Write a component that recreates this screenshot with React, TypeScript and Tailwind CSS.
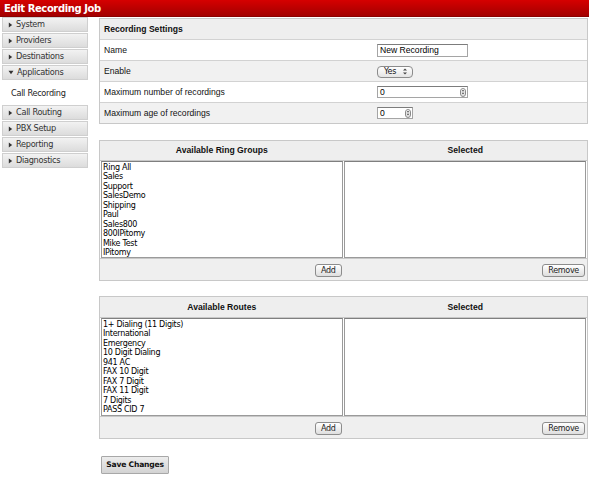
import React from 'react'

const SIDE_TOP = ['System', 'Providers', 'Destinations']
const SIDE_BOTTOM = ['Call Routing', 'PBX Setup', 'Reporting', 'Diagnostics']

const RING_GROUPS = [
  'Ring All', 'Sales', 'Support', 'SalesDemo', 'Shipping',
  'Paul', 'Sales800', '800IPitomy', 'Mike Test', 'IPitomy',
]

const ROUTES = [
  '1+ Dialing (11 Digits)', 'International', 'Emergency', '10 Digit Dialing', '941 AC',
  'FAX 10 Digit', 'FAX 7 Digit', 'FAX 11 Digit', '7 Digits', 'PASS CID 7',
]

function Tri({ down = false }: { down?: boolean }) {
  return down ? (
    <svg width="6" height="5" viewBox="0 0 6 5" className="shrink-0">
      <path d="M0.5 0.8 L5.5 0.8 L3 4.2 Z" fill="#333" />
    </svg>
  ) : (
    <svg width="5" height="6" viewBox="0 0 5 6" className="shrink-0">
      <path d="M0.8 0.5 L4.2 3 L0.8 5.5 Z" fill="#333" />
    </svg>
  )
}

function SideItem({ label, open = false }: { label: string; open?: boolean }) {
  return (
    <div className="h-[15px] flex items-center gap-[3px] pl-[5px] border border-[#cfcfcf] bg-gradient-to-b from-[#f2f2f2] to-[#dcdcdc] text-[#333] font-['DejaVu_Sans',sans-serif] text-[8.2px] tracking-[-0.3px]">
      <Tri down={open} />
      <span>{label}</span>
    </div>
  )
}

function Arrows() {
  return (
    <svg width="4" height="7" viewBox="0 0 4 7" className="shrink-0">
      <path d="M0 2.6 L2 0.4 L4 2.6 Z M0 4.4 L2 6.6 L4 4.4 Z" fill="#444" />
    </svg>
  )
}

function Spinner() {
  return (
    <div className="w-[6px] h-[9px] rounded-[3px] border border-[#8a8a8a] bg-gradient-to-b from-white to-[#e0e0e0] flex items-center justify-center">
      <svg width="4" height="6" viewBox="0 0 4 6">
        <path d="M0.6 2.3 L2 0.8 L3.4 2.3 Z M0.6 3.7 L2 5.2 L3.4 3.7 Z" fill="#444" />
      </svg>
    </div>
  )
}

function MacButton({ label }: { label: string }) {
  return (
    <button className="h-[13px] px-[5px] rounded-[3px] border border-[#8c8c8c] bg-gradient-to-b from-white to-[#dedede] text-[#222] font-['DejaVu_Sans',sans-serif] text-[8px] tracking-[-0.3px] leading-none">
      {label}
    </button>
  )
}

function Listbox({ items, tall }: { items: string[]; tall?: boolean }) {
  return (
    <div className={`${tall ? 'h-[98px]' : 'h-[97px]'} overflow-hidden pt-[0.5px] bg-white border border-[#9a9a9a] border-t-[#7f7f7f] font-['DejaVu_Sans',sans-serif] text-[8px] tracking-[-0.3px] leading-[9.5px] text-black`}>
      {items.map((item) => (
        <div key={item} className="pl-[1px] whitespace-nowrap">{item}</div>
      ))}
    </div>
  )
}

function TransferTable({ title, items, tall }: { title: string; items: string[]; tall?: boolean }) {
  return (
    <div className="border border-[#c8c8c8]">
      <div className={`grid grid-cols-2 ${tall ? 'h-[21px]' : 'h-[20px]'} items-center bg-[#eeeeee] border-b border-[#c8c8c8] font-['Liberation_Sans',Arial,sans-serif] text-[8.6px] font-bold text-[#111]`}>
        <div className="text-center">{title}</div>
        <div className="text-center">Selected</div>
      </div>
      <div className="grid grid-cols-2 gap-[1px] px-[1px] bg-white">
        <Listbox items={items} tall={tall} />
        <Listbox items={[]} tall={tall} />
      </div>
      <div className="grid grid-cols-2 h-[22px] items-center bg-[#efefef] border-t border-[#c8c8c8]">
        <div className="flex justify-end pr-[2px] pt-[2px]">
          <MacButton label="Add" />
        </div>
        <div className="flex justify-end pr-[2px] pt-[2px]">
          <MacButton label="Remove" />
        </div>
      </div>
    </div>
  )
}

function SettingRow({ label, shaded, children }: { label: string; shaded?: boolean; children: React.ReactNode }) {
  return (
    <div className={`flex items-center h-[21px] border-t border-[#d2d2d2] ${shaded ? 'bg-[#f1f1f1]' : 'bg-white'}`}>
      <div className="w-[277px] pl-[4px] text-[#111]">{label}</div>
      <div className="flex-1 flex items-center">{children}</div>
    </div>
  )
}

export default function App() {
  return (
    <div className="w-[589px] h-[480px] bg-white overflow-hidden">
      <div className="h-[17px] flex items-center pl-[4px] bg-gradient-to-b from-[#d60000] to-[#a30000] border-b border-[#8a0000] text-white font-['DejaVu_Sans',sans-serif] font-bold text-[10px] tracking-[-0.4px]">
        Edit Recording Job
      </div>

      <div className="flex">
        <aside className="w-[86px] ml-[2px] flex flex-col">
          <div className="flex flex-col gap-[1px] pb-[1px]">
            {SIDE_TOP.map((s) => (
              <SideItem key={s} label={s} />
            ))}
            <SideItem label="Applications" open />
          </div>
          <div className="h-[24px] flex items-center pl-[9px] bg-white text-[#222] font-['DejaVu_Sans',sans-serif] text-[8.2px] tracking-[-0.3px]">
            Call Recording
          </div>
          <div className="flex flex-col gap-[1px]">
            {SIDE_BOTTOM.map((s) => (
              <SideItem key={s} label={s} />
            ))}
          </div>
        </aside>

        <main className="ml-[11px] w-[489px] mt-[1px] font-['Liberation_Sans',Arial,sans-serif] text-[8.6px]">
          <div className="border-x border-b border-[#c8c8c8]">
            <div className="flex items-center h-[21px] border-t border-[#c8c8c8] bg-[#eeeeee] pl-[4px] font-bold text-[#111]">
              Recording Settings
            </div>
            <SettingRow label="Name">
              <div className="w-[91px] h-[13px] border border-[#a5a5a5] border-t-[#7c7c7c] bg-white flex items-center pl-[2px] text-black">
                New Recording
              </div>
            </SettingRow>
            <SettingRow label="Enable" shaded>
              <div className="w-[36px] h-[12px] mt-[1px] rounded-[4px] border border-[#8c8c8c] bg-gradient-to-b from-white to-[#e4e4e4] flex items-center justify-between pl-[6px] pr-[5px] font-['DejaVu_Sans',sans-serif] text-[8px] tracking-[-0.3px] text-[#111]">
                <span>Yes</span>
                <Arrows />
              </div>
            </SettingRow>
            <SettingRow label="Maximum number of recordings">
              <div className="w-[91px] h-[12px] border border-[#a5a5a5] border-t-[#7c7c7c] bg-white flex items-center justify-between pl-[2px] pr-[1px] text-black">
                <span>0</span>
                <Spinner />
              </div>
            </SettingRow>
            <SettingRow label="Maximum age of recordings" shaded>
              <div className="w-[36px] h-[12px] border border-[#a5a5a5] border-t-[#7c7c7c] bg-white flex items-center justify-between pl-[2px] pr-[1px] text-black">
                <span>0</span>
                <Spinner />
              </div>
            </SettingRow>
          </div>

          <div className="mt-[16px]">
            <TransferTable title="Available Ring Groups" items={RING_GROUPS} />
          </div>

          <div className="mt-[15px]">
            <TransferTable title="Available Routes" items={ROUTES} tall />
          </div>

          <button className="mt-[17px] ml-[2px] w-[68px] h-[18px] border border-[#a8a8a8] rounded-[1px] bg-gradient-to-b from-[#ededed] to-[#d3d3d3] text-[#111] font-['DejaVu_Sans',sans-serif] font-bold text-[7.6px] tracking-[-0.2px]">
            Save Changes
          </button>
        </main>
      </div>
    </div>
  )
}
